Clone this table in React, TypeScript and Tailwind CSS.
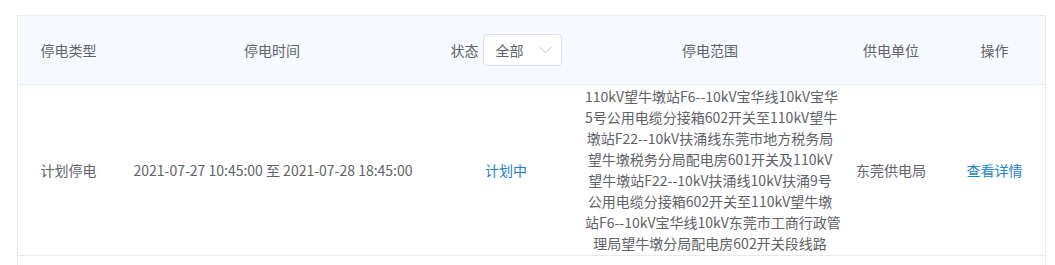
import React from "react";

const rangeLines = [
  "110kV望牛墩站F6--10kV宝华线10kV宝华",
  "5号公用电缆分接箱602开关至110kV望牛",
  "墩站F22--10kV扶涌线东莞市地方税务局",
  "望牛墩税务分局配电房601开关及110kV",
  "望牛墩站F22--10kV扶涌线10kV扶涌9号",
  "公用电缆分接箱602开关至110kV望牛墩",
  "站F6--10kV宝华线10kV东莞市工商行政管",
  "理局望牛墩分局配电房602开关段线路",
];

const cols = "grid grid-cols-[101px_306px_162px_246px_116px_97px]";

export default function App() {
  return (
    <div
      className="w-[1055px] h-[265px] overflow-hidden bg-white pt-[15px] pl-[17px] pr-[9px]"
      style={{ fontFamily: '"Noto Sans CJK SC", "Noto Sans", sans-serif' }}
    >
      <div className="border-l border-r border-t border-[#e8eaee] text-[14px] text-[#606266]">
        {/* header */}
        <div className={`${cols} h-[69px] bg-[#f6f9fd] border-b border-[#e8eaee] items-center`}>
          <div className="text-center">停电类型</div>
          <div className="text-center">停电时间</div>
          <div className="flex items-center justify-center gap-[4px]">
            <span>状态</span>
            <div className="w-[79px] h-[32px] border border-[#dcdfe6] rounded-[4px] bg-white flex items-center justify-between pl-[12px] pr-[9px]">
              <span className="text-[#606266]">全部</span>
              <svg width="13" height="8" viewBox="0 0 13 8" fill="none">
                <path d="M0.5 0.8 L6.5 6.8 L12.5 0.8" stroke="#c0c4cc" strokeWidth="1" />
              </svg>
            </div>
          </div>
          <div className="text-center">停电范围</div>
          <div className="text-center">供电单位</div>
          <div className="text-center pr-[6px]">操作</div>
        </div>
        {/* row */}
        <div className={`${cols} border-b border-[#e8eaee] items-center py-[1px]`}>
          <div className="text-center">计划停电</div>
          <div className="text-center whitespace-nowrap pl-[2px]">2021-07-27 10:45:00 至 2021-07-28 18:45:00</div>
          <div className="text-center text-[#1a82d2]">计划中</div>
          <div className="flex justify-center">
            <div className="w-[250px] shrink-0 text-center leading-[21px] whitespace-nowrap">
              {rangeLines.map((l, i) => (
                <div key={i}>{l}</div>
              ))}
            </div>
          </div>
          <div className="text-center">东莞供电局</div>
          <div className="text-center text-[#1a82d2] pr-[6px]">查看详情</div>
        </div>
        <div className="h-[60px]" />
      </div>
    </div>
  );
}
